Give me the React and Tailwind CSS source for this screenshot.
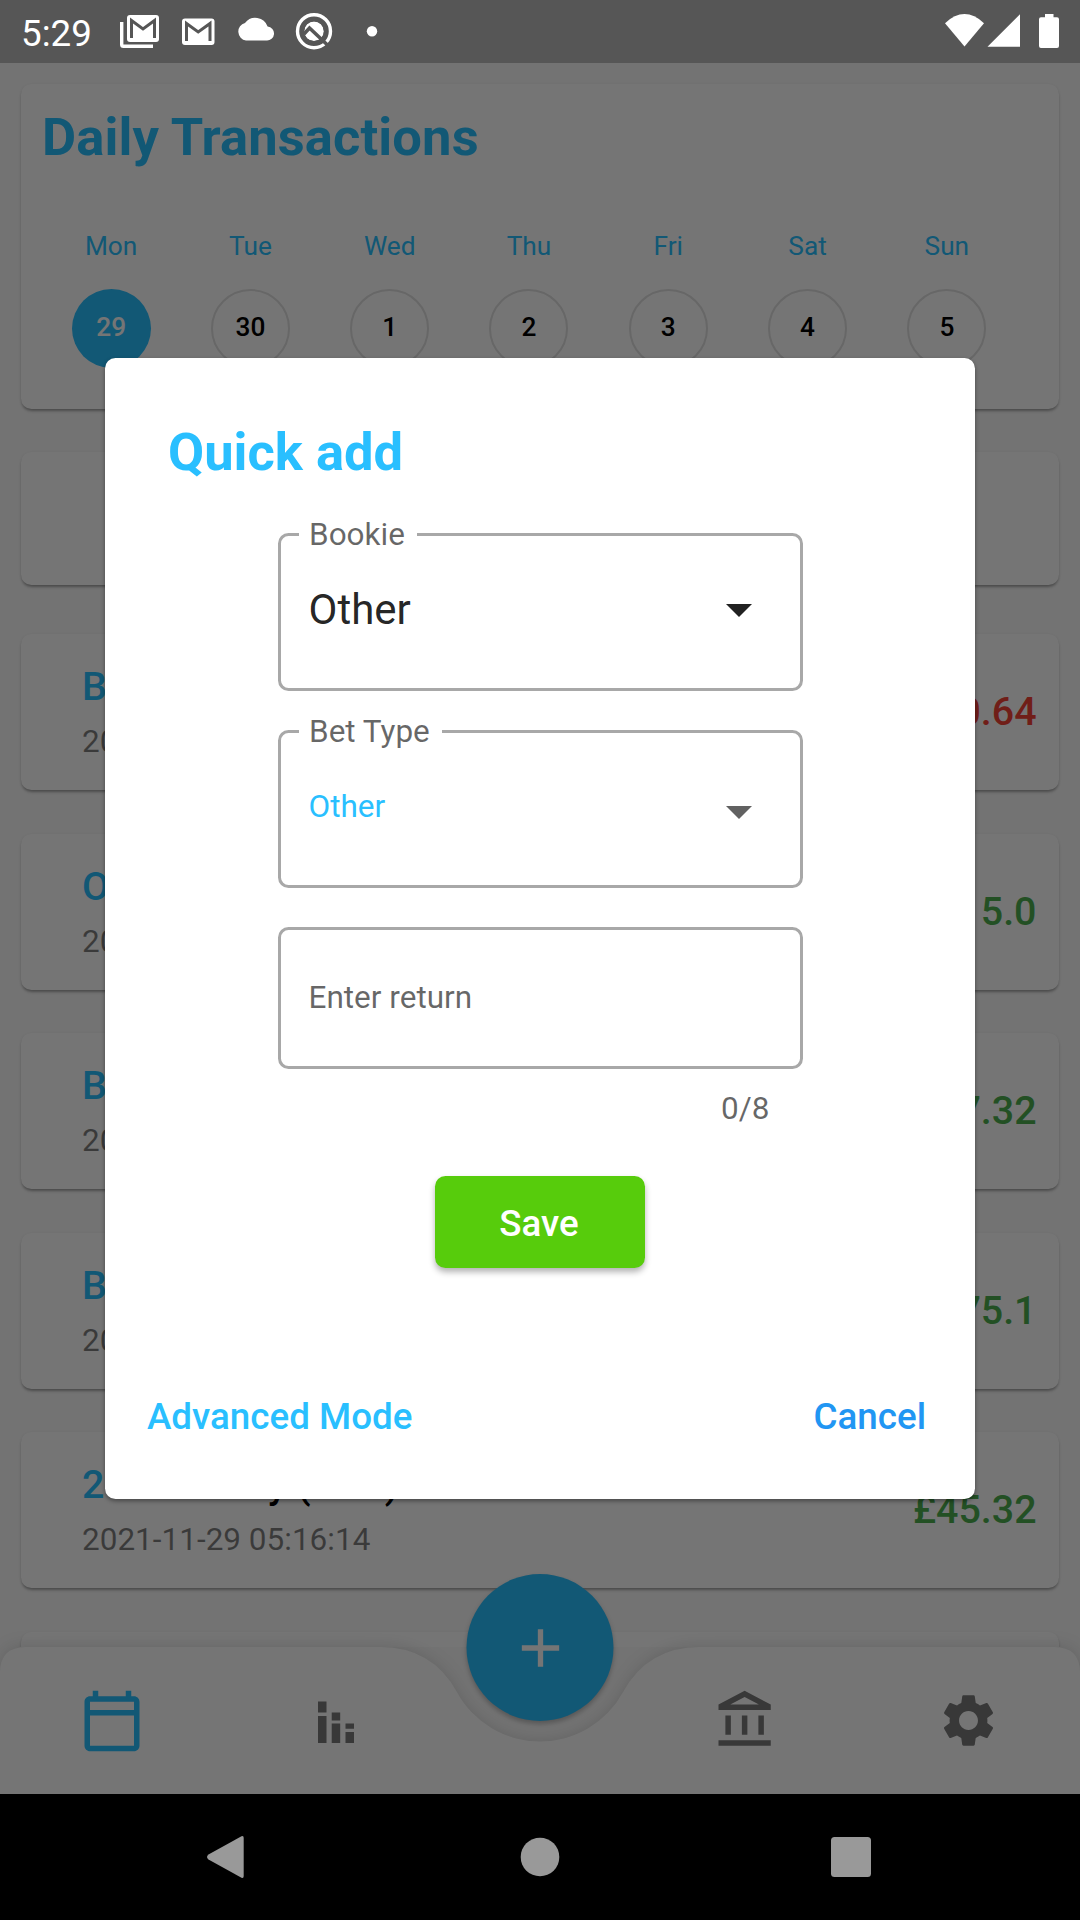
import { useState } from "react";
import { MdAdd, MdOutlineAccountBalance, MdSettings } from "react-icons/md";

const days = [
  { name: "Mon", date: 29 },
  { name: "Tue", date: 30 },
  { name: "Wed", date: 1 },
  { name: "Thu", date: 2 },
  { name: "Fri", date: 3 },
  { name: "Sat", date: 4 },
  { name: "Sun", date: 5 },
];

const transactions = [
  { bookie: "Bet365", date: "2021-11-29 05:18:52", amount: "-£10.64", loss: true },
  { bookie: "Other", date: "2021-11-29 05:18:20", amount: "£15.0" },
  { bookie: "Betfair", date: "2021-11-29 05:17:41", amount: "£17.32" },
  { bookie: "Betfred", date: "2021-11-29 05:16:58", amount: "£75.1" },
  { bookie: "2", name: "Tote Daily (Line)", date: "2021-11-29 05:16:14", amount: "£45.32" },
];

const cardShadow = "shadow-[0_3px_3px_-1px_rgba(0,0,0,0.3),0_1px_3px_rgba(0,0,0,0.1)]";

function StatusBar() {
  return (
    <div className="absolute inset-x-0 top-0 z-30 flex h-[63px] items-center bg-black/25 text-white">
      <span className="ml-[21px] w-[99px] pt-[4px] text-[36.75px] leading-[44px]">5:29</span>
      <svg className="h-[63px] w-[260px]" viewBox="120 0 260 63" fill="none">
        <path d="M121.7 22V44.5Q121.7 46.3 123.5 46.3H153" stroke="#fff" strokeWidth="3.4" />
        <rect x="127" y="15" width="32" height="27" rx="3" fill="#fff" />
        <path d="M131.5 38V20.5L143 29L154.5 20.5V38" stroke="#565656" strokeWidth="3" />
        <rect x="182" y="18.5" width="32.5" height="26.5" rx="3" fill="#fff" />
        <path d="M186.5 41V23.5L198.2 32L210 23.5V41" stroke="#565656" strokeWidth="3" />
        <path d="M246 40.5a9 9 0 0 1-1-17.600a13 13 0 0 1 22.600 3.600a7 7 0 0 1-1.100 14z" fill="#fff" />
        <circle cx="314" cy="31.2" r="16.5" stroke="#fff" strokeWidth="3.4" />
        <circle cx="314" cy="31.2" r="10" fill="#fff" />
        <circle cx="314" cy="31.2" r="11.3" stroke="#565656" strokeWidth="3" />
        <path d="M304 34L309.5 28L328 45.5" stroke="#565656" strokeWidth="3.6" />
        <circle cx="372" cy="31.2" r="5.2" fill="#fff" />
      </svg>
      <svg className="ml-auto h-[63px] w-[135px]" viewBox="945 0 135 63" fill="#fff">
        <path d="M964.5 46.5L945 23.2Q964.5 5 984 23.2Z" />
        <path d="M987.5 46.7L1020 14.2V46.7Z" />
        <path d="M1045 14h8.5v3.3h3.5a2 2 0 0 1 2 2V46a2 2 0 0 1-2 2h-16a2 2 0 0 1-2-2V19.3a2 2 0 0 1 2-2h4z" />
      </svg>
    </div>
  );
}

function DailyCard() {
  return (
    <div className={"h-[325px] shrink-0 rounded-[10.5px] bg-white pt-[23px] pl-[21px] " + cardShadow}>
      <h1 className="text-[52.5px] font-bold leading-[60px] tracking-[0.1px] text-[#29bfff]">Daily Transactions</h1>
      <div className="mt-[64px] grid w-[975px] grid-cols-7">
        {days.map((day, i) => (
          <div key={day.name} className="flex flex-col items-center pr-px">
            <span className="text-[26.25px] leading-[30px] text-[#29bfff]">{day.name}</span>
            <div
              className={
                "mt-7 flex size-[79px] items-center justify-center rounded-full pb-[2px] text-[26.25px] font-medium " +
                (i === 0 ? "bg-[#29bfff] text-white" : "border-2 border-[#e0e0e0] text-black")
              }
            >
              {day.date}
            </div>
          </div>
        ))}
      </div>
    </div>
  );
}

function TransactionCard({ item }) {
  return (
    <div className={"flex h-[156px] shrink-0 items-center justify-between rounded-[10.5px] bg-white pr-[22.5px] pl-[61px] " + cardShadow}>
      <div className="pt-[6px]">
        <p className="text-[39.375px] font-medium leading-[50px] text-[#29bfff]">
          {item.bookie}
          {item.name && <span className="text-black"> {item.name}</span>}
        </p>
        <p className="mt-[3px] text-[31.5px] leading-[53px] text-black/50">{item.date}</p>
      </div>
      <span className={"text-[39.375px] font-medium leading-[44px] " + (item.loss ? "text-[#f44336]" : "text-[#4caf50]")}>
        {item.amount}
      </span>
    </div>
  );
}

function BottomNav() {
  return (
    <nav className="relative h-[147px] shrink-0 text-black/52">
      <svg className="absolute inset-0 overflow-visible drop-shadow-[0_-1px_8px_rgba(0,0,0,0.13)]" width="1080" height="147" viewBox="0 0 1080 147">
        <path
          fill="#fff"
          d="M0 147V26Q0 0 26 0H379.9Q432.4 0 457 45.2A94.5 94.5 0 0 0 623 45.2Q647.6 0 700.1 0H1054Q1080 0 1080 26V147Z"
        />
      </svg>
      <div className="relative flex h-full items-center">
        <div className="flex w-[223px] justify-center">
          <svg className="size-[66px] fill-[#29bfff]" viewBox="0 0 24 24">
            <path d="M20 3h-1V1h-2v2H7V1H5v2H4c-1.100 0-2 .9-2 2v16c0 1.100.9 2 2 2h16c1.100 0 2-.9 2-2V5c0-1.100-.9-2-2-2zm0 18H4V10h16v11zm0-13H4V5h16v3z" />
          </svg>
        </div>
        <div className="flex w-[225px] justify-center">
          <svg className="h-[42px] w-[36px] translate-y-px" viewBox="0 0 36 42" fill="currentColor">
            <path d="M0 .5h8.500v11H0zM0 15h8.500v27H0zM13.700 11.500h8.500v8h-8.500zM13.700 22.500h8.500V42h-8.500zM27.500 22.500H36v5.200h-8.500zM27.500 31H36v11h-8.500z" />
          </svg>
        </div>
        <div className="ml-[187px] flex w-[222px] justify-center">
          <MdOutlineAccountBalance className="size-[66px]" />
        </div>
        <div className="flex w-[223px] justify-center">
          <MdSettings className="size-[63px]" />
        </div>
      </div>
      <button className="absolute -top-[73px] left-1/2 flex size-[147px] -translate-x-1/2 items-center justify-center rounded-full bg-[#29bfff] text-white shadow-[0_3px_5px_rgba(0,0,0,0.25)]">
        <MdAdd className="size-[64px]" />
      </button>
    </nav>
  );
}

function SelectField({ label, children }) {
  return (
    <div className="relative flex h-[158px] w-[525px] items-center justify-between rounded-[10.5px] border-3 border-[#a8a8a8] pr-[48px] pl-[28px]">
      <label className="absolute -top-[20px] left-[18.5px] bg-white pr-[12px] pl-[10px] text-[31.5px] leading-[37px] text-black/60">{label}</label>
      {children}
    </div>
  );
}

function QuickAddDialog() {
  const [value, setValue] = useState("");

  return (
    <div className="flex h-[1141px] w-[870px] flex-col items-center rounded-[10.5px] bg-white pt-[64px] shadow-[0_2px_4px_rgba(0,0,0,0.4)]">
      <h2 className="w-full pl-[63px] text-[52.5px] font-bold leading-[60px] text-[#29bfff]">Quick add</h2>
      <div className="mt-[51px] flex flex-col gap-[39px]">
        <SelectField label="Bookie">
          <span className="pb-[4px] text-[42px] leading-[50px] text-black/87">Other</span>
          <svg className="mt-[-3px] h-[13px] w-[26px] fill-[#212121]" viewBox="0 0 26 13">
            <path d="M0 0h26L13 13z" />
          </svg>
        </SelectField>
        <SelectField label="Bet Type">
          <span className="pb-[5px] text-[31.5px] leading-[38px] text-[#29bfff]">Other</span>
          <svg className="mt-[7px] h-[13px] w-[26px] fill-[#616161]" viewBox="0 0 26 13">
            <path d="M0 0h26L13 13z" />
          </svg>
        </SelectField>
        <input
          value={value}
          onChange={(e) => setValue(e.target.value)}
          maxLength={8}
          placeholder="Enter return"
          className="h-[142px] w-[525px] rounded-[10.5px] border-3 border-[#a8a8a8] px-[28px] pb-[2px] text-[31.5px] placeholder:text-black/60"
        />
      </div>
      <div className="mt-[21px] w-[525px] pr-[33px] text-right text-[31.5px] leading-[38px] text-black/60">{value.length}/8</div>
      <button className="mt-[48px] h-[92px] w-[210px] shrink-0 rounded-[10.5px] bg-[#57cc0c] pt-[3px] pr-[2px] text-[36.75px] font-medium text-white shadow-[0_4px_6px_rgba(0,0,0,0.3)]">
        Save
      </button>
      <div className="mt-[127px] flex w-full justify-between pr-[49px] pl-[42px] text-[36.75px] font-medium leading-[44px]">
        <button className="text-[#29bfff]">Advanced Mode</button>
        <button className="text-[#2196f3]">Cancel</button>
      </div>
    </div>
  );
}

function SystemNav() {
  return (
    <div className="relative z-30 h-[126px] shrink-0 bg-black">
      <svg width="1080" height="126" viewBox="0 0 1080 126" fill="#999">
        <path d="M241.5 42.3L208.5 60.5Q205.5 63 208.5 65.5L241.5 83.7Q243.7 84.5 243.7 82V44Q243.7 41.5 241.5 42.3Z" />
        <circle cx="540" cy="63" r="19.3" />
        <rect x="831" y="43" width="40" height="40" rx="3.5" />
      </svg>
    </div>
  );
}

export default function App() {
  return (
    <div className="relative flex h-[1920px] w-[1080px] flex-col overflow-hidden bg-[#fafafa] font-[Roboto,sans-serif]">
      <StatusBar />
      <main className="flex h-[1647px] shrink-0 flex-col overflow-hidden px-[21px] pt-[84px]">
        <DailyCard />
        <div className={"mt-[43px] h-[133px] shrink-0 rounded-[10.5px] bg-white " + cardShadow} />
        <div className="mt-[49px] flex flex-col gap-[43.5px]">
          {transactions.map((item) => (
            <TransactionCard key={item.date} item={item} />
          ))}
          <div className={"h-[156px] shrink-0 rounded-[10.5px] bg-white " + cardShadow} />
        </div>
      </main>
      <BottomNav />
      <SystemNav />
      <div className="absolute inset-0 z-20 flex items-center justify-center bg-black/54 pt-[63px] pb-[126px]">
        <QuickAddDialog />
      </div>
    </div>
  );
}
